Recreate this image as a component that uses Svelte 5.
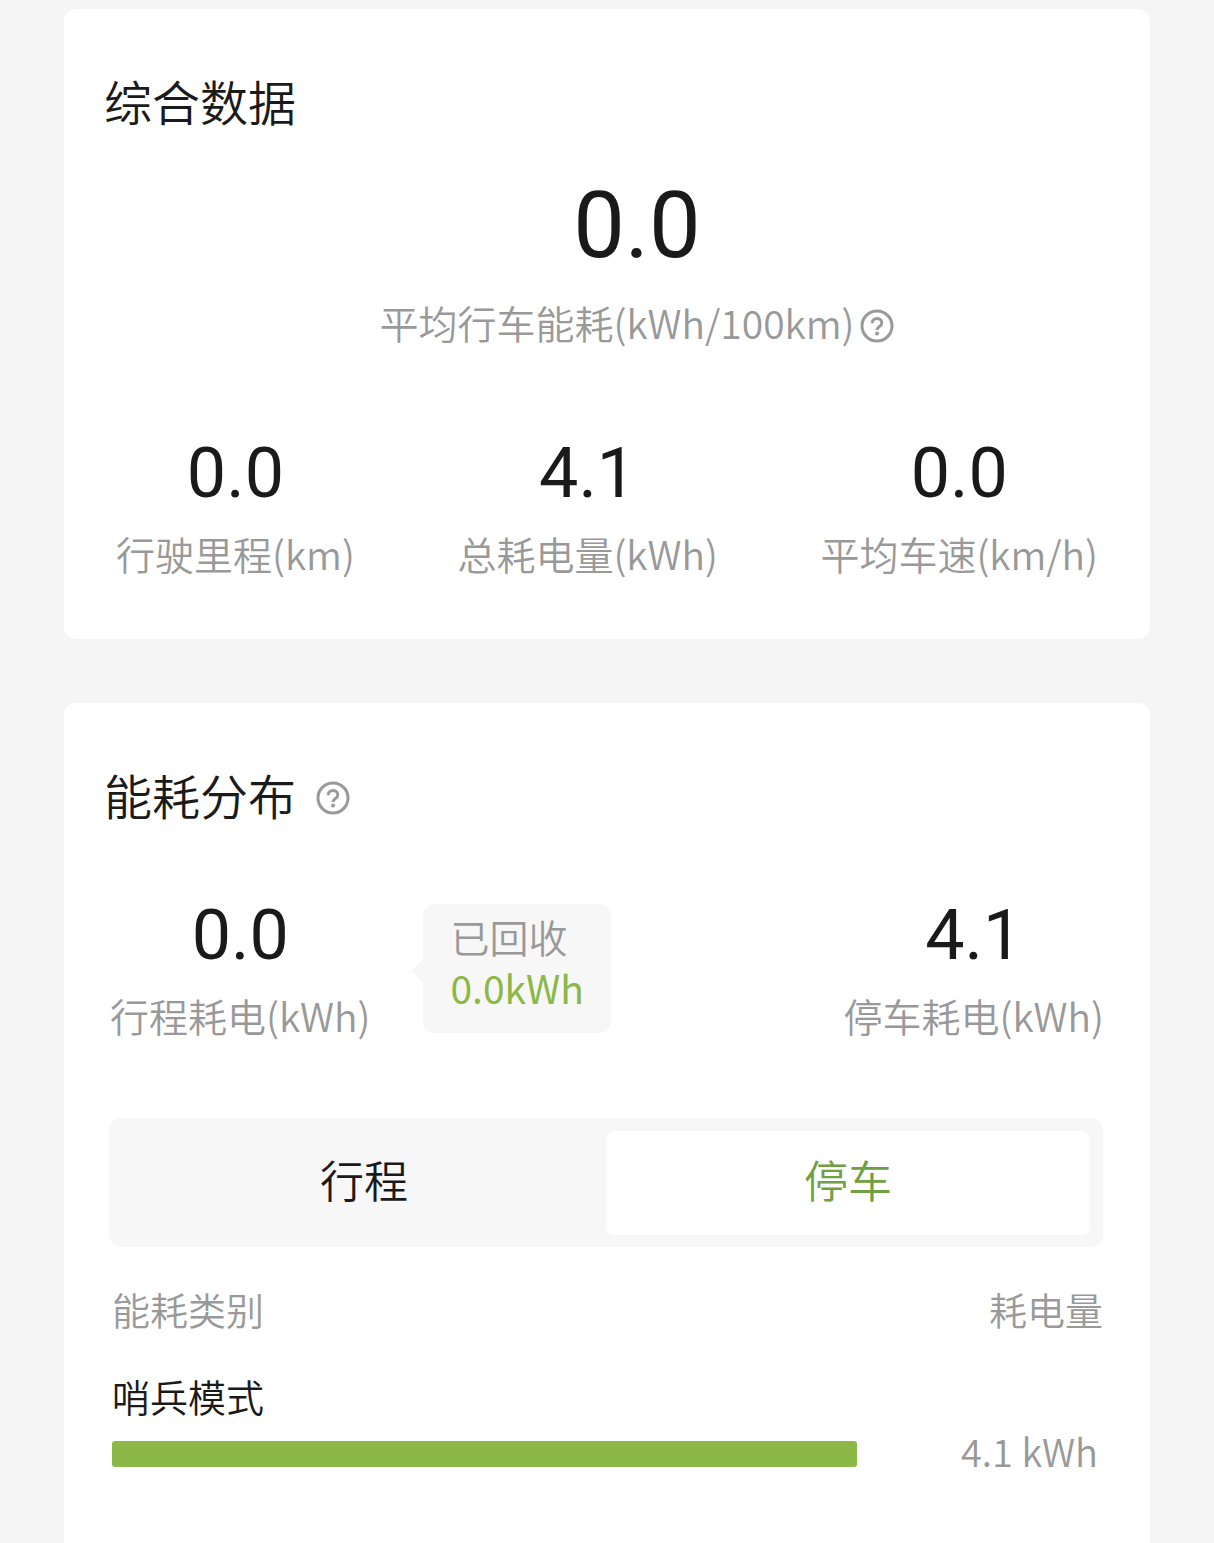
<script lang="ts">
  /**
   * Energy Report
   * Summary figures and the energy breakdown for driving and parking
   */

  type Stat = { value: string; label: string };
  type Usage = { name: string; value: number; share: number };
  type TabKey = 'trip' | 'parking';

  const average: Stat = { value: '0.0', label: '平均行车能耗(kWh/100km)' };

  const stats: Stat[] = [
    { value: '0.0', label: '行驶里程(km)' },
    { value: '4.1', label: '总耗电量(kWh)' },
    { value: '0.0', label: '平均车速(km/h)' },
  ];

  const tabs: { key: TabKey; label: string }[] = [
    { key: 'trip', label: '行程' },
    { key: 'parking', label: '停车' },
  ];

  const usage: Record<TabKey, Usage[]> = {
    trip: [],
    parking: [{ name: '哨兵模式', value: 4.1, share: 100 }],
  };

  let active = $state<TabKey>('parking');
</script>

{#snippet helpIcon()}
  <button class="help" type="button" aria-label="说明">
    <svg viewBox="0 0 34 34" width="34" height="34" fill="none" stroke="#999999">
      <circle cx="17" cy="17" r="15" stroke-width="3" />
      <path d="M12.2 14.2c0-2.8 2-4.7 4.8-4.7s4.8 1.8 4.8 4.4c0 3.6-4.8 3.6-4.8 7" stroke-width="3" />
      <circle cx="17" cy="24.4" r="2" fill="#999999" stroke="none" />
    </svg>
  </button>
{/snippet}

<main class="page">
  <section class="card">
    <h2 class="title">综合数据</h2>

    <div class="average">
      <div class="average-value">{average.value}</div>
      <div class="average-label">
        <span class="label">{average.label}</span>
        {@render helpIcon()}
      </div>
    </div>

    <div class="stats">
      {#each stats as stat}
        <div class="stat">
          <div class="value">{stat.value}</div>
          <div class="label">{stat.label}</div>
        </div>
      {/each}
    </div>
  </section>

  <section class="card details">
    <div class="heading">
      <h2 class="title">能耗分布</h2>
      {@render helpIcon()}
    </div>

    <div class="split">
      <div class="stat">
        <div class="value">0.0</div>
        <div class="label">行程耗电(kWh)</div>
      </div>
      <div class="recovered">
        <div>已回收</div>
        <div class="recovered-value">0.0kWh</div>
      </div>
      <div class="stat parked">
        <div class="value">4.1</div>
        <div class="label">停车耗电(kWh)</div>
      </div>
    </div>

    <div class="tabs" role="tablist">
      {#each tabs as tab}
        <button
          class="tab"
          class:active={active === tab.key}
          type="button"
          role="tab"
          aria-selected={active === tab.key}
          onclick={() => (active = tab.key)}
        >
          {tab.label}
        </button>
      {/each}
    </div>

    <table class="usage">
      <thead>
        <tr>
          <th>能耗类别</th>
          <th class="amount">耗电量</th>
        </tr>
      </thead>
      <tbody>
        {#each usage[active] as item}
          <tr>
            <td>
              <div class="name">{item.name}</div>
              <div class="bar" style="width: {item.share}%"></div>
            </td>
            <td class="amount used">{item.value} kWh</td>
          </tr>
        {/each}
      </tbody>
    </table>
  </section>
</main>

<style>
  :global(body) {
    margin: 0;
    background: #f5f5f5;
  }

  .page {
    display: flex;
    flex-direction: column;
    gap: 64px;
    box-sizing: border-box;
    min-height: 100vh;
    padding: 9px 64px 0;
    font-family: 'Noto Sans CJK SC', sans-serif;
    font-size: 39px;
    font-weight: 350;
    line-height: 48px;
    color: #1a1a1a;
  }

  .card {
    padding: 61px 40px 62px;
    border-radius: 12px;
    background: #ffffff;
  }

  .details {
    flex: 1;
    padding-bottom: 0;
    border-radius: 12px 12px 0 0;
  }

  .title {
    margin: 0;
    font-size: 48px;
    font-weight: 350;
    line-height: 60px;
  }

  .label {
    color: #999999;
    white-space: nowrap;
  }

  .help {
    display: flex;
    margin-top: 8px;
    padding: 0;
    border: 0;
    background: none;
    cursor: pointer;
  }

  .average {
    display: flex;
    flex-direction: column;
    align-items: center;
    margin-top: 46px;
    padding-left: 60px;
  }

  .average-value {
    font-family: Roboto, sans-serif;
    font-size: 92px;
    font-weight: 400;
    line-height: 100px;
  }

  .average-label {
    display: flex;
    align-items: center;
    gap: 6px;
    margin-top: 22px;
  }

  .stats {
    display: flex;
    justify-content: space-between;
    margin-top: 91px;
    padding: 0 12px;
  }

  .stat {
    display: flex;
    flex-direction: column;
    align-items: center;
    gap: 20px;
  }

  .value {
    font-family: Roboto, sans-serif;
    font-size: 70px;
    font-weight: 400;
    line-height: 72px;
  }

  .heading {
    display: flex;
    align-items: center;
    gap: 20px;
  }

  .split {
    display: flex;
    align-items: flex-start;
    margin-top: 75px;
    padding: 0 6px;
  }

  .parked {
    margin-left: auto;
  }

  .recovered {
    position: relative;
    margin: 5px 0 0 53px;
    padding: 7px 27px 20px;
    border-radius: 12px;
    background: #f7f7f7;
    line-height: 51px;
    color: #999999;
  }

  .recovered::before {
    content: '';
    position: absolute;
    top: 58px;
    left: -8px;
    width: 18px;
    height: 18px;
    background: #f7f7f7;
    transform: rotate(45deg);
  }

  .recovered-value {
    font-weight: 400;
    color: #8bb846;
  }

  .tabs {
    display: flex;
    margin: 79px 7px 0 5px;
    padding: 13px 13px 12px;
    border-radius: 12px;
    background: #f7f7f7;
  }

  .tab {
    flex: 1;
    height: 104px;
    padding: 0 0 8px;
    border: 0;
    border-radius: 8px;
    background: none;
    font: inherit;
    font-size: 44px;
    color: #1a1a1a;
    cursor: pointer;
  }

  .tab.active {
    background: #ffffff;
    color: #6fa043;
  }

  .usage {
    width: 100%;
    margin-top: 38px;
    border-collapse: collapse;
    font-size: 38px;
  }

  .usage th,
  .usage td {
    padding: 0 0 0 8px;
    text-align: left;
    font-weight: 350;
    color: #999999;
  }

  .usage .amount {
    width: 241px;
    padding: 0 7px 0 0;
    text-align: right;
  }

  .usage td {
    padding-top: 39px;
  }

  .usage .used {
    padding-right: 12px;
    padding-bottom: 3px;
    vertical-align: bottom;
    line-height: 26px;
  }

  .name {
    color: #1a1a1a;
  }

  .bar {
    height: 26px;
    margin-top: 21px;
    border-radius: 3px;
    background: #8bb846;
  }
</style>
